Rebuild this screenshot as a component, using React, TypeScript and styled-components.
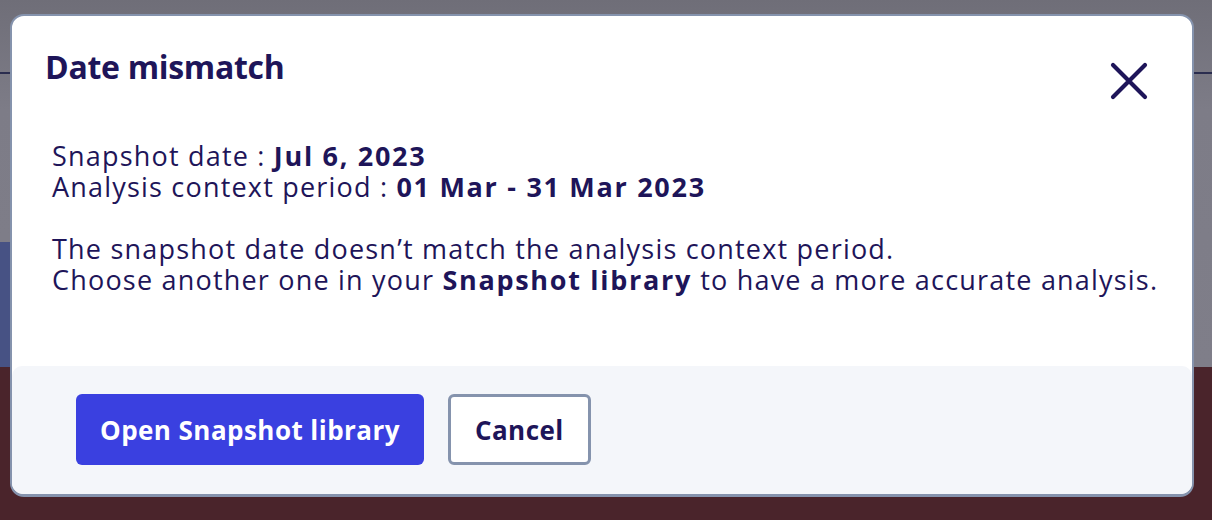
import React from "react";
import styled, { createGlobalStyle } from "styled-components";

const GlobalStyle = createGlobalStyle`
  html, body {
    margin: 0;
    padding: 0;
  }
  body {
    font-family: "Open Sans", "Liberation Sans", sans-serif;
    color: #1e1559;
  }
`;

const App = () => {
  return (
    <>
      <GlobalStyle />
      <Page>
        <TopArea>
          <HeaderBar />
          <SideStrip />
        </TopArea>
        <BottomArea />
        <Modal role="dialog" aria-labelledby="date-mismatch-title">
          <ModalHeader>
            <Title id="date-mismatch-title">Date mismatch</Title>
            <CloseButton aria-label="Close">
              <svg width="38" height="38" viewBox="0 0 38 38" fill="none">
                <path
                  d="M3 3L35 35M35 3L3 35"
                  stroke="#1e1559"
                  strokeWidth="4.2"
                  strokeLinecap="round"
                />
              </svg>
            </CloseButton>
          </ModalHeader>
          <ModalBody>
            <Paragraph>
              Snapshot date : <b>Jul 6, 2023</b>
              <br />
              Analysis context period : <b>01 Mar - 31 Mar 2023</b>
            </Paragraph>
            <Paragraph>
              The snapshot date doesn’t match the analysis context period.
              <br />
              Choose another one in your <b>Snapshot library</b> to have a more
              accurate analysis.
            </Paragraph>
          </ModalBody>
          <ModalFooter>
            <Button $variant="primary">Open Snapshot library</Button>
            <Button $variant="secondary">Cancel</Button>
          </ModalFooter>
        </Modal>
      </Page>
    </>
  );
};

export default App;

const Page = styled.div`
  position: relative;
  display: flex;
  flex-direction: column;
  width: 1212px;
  height: 520px;
  overflow: hidden;
`;

const TopArea = styled.div`
  display: flex;
  flex-direction: column;
  height: 367px;
  background: linear-gradient(180deg, #6f6e78 0%, #7d7c87 30%, #7f7e89 100%);
`;

const HeaderBar = styled.div`
  height: 72px;
  border-bottom: 2px solid #2a2d4f;
`;

const SideStrip = styled.div`
  width: 24px;
  height: 125px;
  margin-top: 168px;
  background: #475284;
`;

const BottomArea = styled.div`
  flex: 1;
  background: #4a242b;
`;

const Modal = styled.div`
  position: absolute;
  top: 14px;
  left: 10px;
  width: 1184px;
  height: 483px;
  box-sizing: border-box;
  display: flex;
  flex-direction: column;
  background: #ffffff;
  border: 2px solid #8593ad;
  border-bottom-width: 3px;
  border-radius: 14px;
  overflow: hidden;
`;

const ModalHeader = styled.div`
  display: flex;
  justify-content: space-between;
  align-items: flex-start;
  padding: 32px 44px 0 33px;
`;

const Title = styled.h2`
  margin: 0;
  font-size: 32px;
  line-height: 38px;
  font-weight: 700;
  letter-spacing: -0.3px;
  color: #1e1559;
`;

const CloseButton = styled.button`
  display: flex;
  margin-top: 14px;
  padding: 0;
  border: none;
  background: none;
  cursor: pointer;
`;

const ModalBody = styled.div`
  display: flex;
  flex-direction: column;
  gap: 31px;
  flex: 1;
  padding: 40px 0 0 40px;
`;

const Paragraph = styled.p`
  margin: 0;
  font-size: 27px;
  line-height: 31px;
  letter-spacing: 1.2px;
  white-space: nowrap;
  color: #1e1559;
  & b {
    font-weight: 700;
    letter-spacing: 1.7px;
  }
`;

const ModalFooter = styled.div`
  display: flex;
  gap: 24px;
  height: 128px;
  box-sizing: border-box;
  padding: 28px 64px 0 64px;
  background: #f4f6fa;
  border-radius: 10px 10px 0 0;
`;

const Button = styled.button<{ $variant: "primary" | "secondary" }>`
  height: 71px;
  box-sizing: border-box;
  padding: 0 24px;
  font-family: "Open Sans", "Liberation Sans", sans-serif;
  font-size: 26px;
  font-weight: 700;
  letter-spacing: 0.45px;
  border-radius: 6px;
  cursor: pointer;
  color: ${(p) => (p.$variant === "primary" ? "#ffffff" : "#1e1559")};
  background: ${(p) => (p.$variant === "primary" ? "#3a40e0" : "#ffffff")};
  border: ${(p) =>
    p.$variant === "primary" ? "none" : "3px solid #8593ad"};
`;
